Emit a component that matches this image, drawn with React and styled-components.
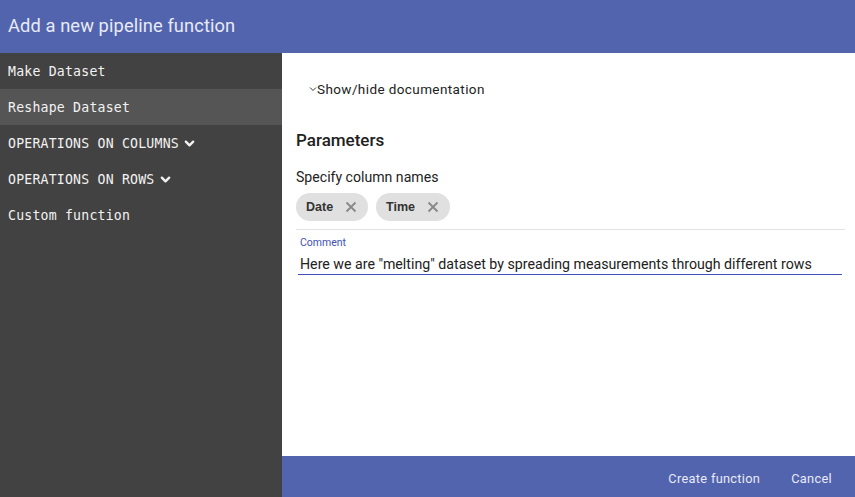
import React from 'react';
import styled, { createGlobalStyle } from 'styled-components';

const GlobalStyle = createGlobalStyle`
  html, body {
    margin: 0;
    padding: 0;
    background: #ffffff;
  }
  * {
    box-sizing: border-box;
  }
`;

const Page = styled.div`
  width: 855px;
  height: 497px;
  display: flex;
  flex-direction: column;
  font-family: Roboto, 'Liberation Sans', sans-serif;
  overflow: hidden;
`;

const TitleBar = styled.header`
  height: 53px;
  flex-shrink: 0;
  background: #5264ae;
  color: #e8eaf6;
  display: flex;
  align-items: center;
  padding: 0 8px 2px;
  font-size: 18.3px;
  letter-spacing: 0.1px;
`;

const Body = styled.div`
  flex: 1;
  display: flex;
  min-height: 0;
`;

const Sidebar = styled.nav`
  width: 282px;
  flex-shrink: 0;
  background: #424242;
  display: flex;
  flex-direction: column;
`;

const NavItem = styled.div`
  height: 36px;
  display: flex;
  align-items: center;
  gap: 5px;
  padding: 0 8px;
  background: ${p => (p.$active ? '#555555' : 'transparent')};
  color: #f2f2f2;
  font-family: 'DejaVu Sans Mono', 'Liberation Mono', monospace;
  font-size: 13.2px;
  letter-spacing: 0.2px;
`;

const Main = styled.main`
  flex: 1;
  display: flex;
  flex-direction: column;
  min-width: 0;
`;

const Content = styled.section`
  flex: 1;
  padding: 26px 10px 0 14px;
  color: #212121;
`;

const DocToggle = styled.div`
  display: flex;
  align-items: center;
  padding-left: 13px;
  height: 20px;
  font-size: 13.5px;
  letter-spacing: 0.4px;
  color: #222;
`;

const SectionTitle = styled.h2`
  margin: 30px 0 0;
  font-size: 17px;
  font-weight: 500;
  color: #212121;
  line-height: 22px;
`;

const FieldLabel = styled.div`
  margin-top: 16px;
  font-size: 14.1px;
  line-height: 20px;
  color: #222;
`;

const ChipRow = styled.div`
  display: flex;
  gap: 8px;
  margin-top: 6px;
  padding-bottom: 8px;
  border-bottom: 1px solid #e4e4e4;
`;

const Chip = styled.div`
  height: 28px;
  display: flex;
  align-items: center;
  gap: 12px;
  padding: 0 11px 0 10px;
  border-radius: 14px;
  background: #e0e0e0;
  color: #333;
  font-family: 'Liberation Sans', Arial, sans-serif;
  font-weight: bold;
  font-size: 12.5px;
`;

const CommentField = styled.div`
  margin: 6px 3px 0 2px;
  border-bottom: 1px solid #3f51b5;
  padding-bottom: 1px;
`;

const CommentLabel = styled.div`
  font-size: 10.5px;
  color: #3f51b5;
  padding-left: 2px;
  line-height: 14px;
`;

const CommentValue = styled.div`
  margin-top: 5px;
  font-size: 14.2px;
  color: #212121;
  padding-left: 2px;
  line-height: 18px;
  white-space: nowrap;
`;

const Footer = styled.footer`
  height: 41px;
  flex-shrink: 0;
  background: #5264ae;
  display: flex;
  justify-content: flex-end;
  align-items: center;
  gap: 31px;
  padding: 3px 23px 0 0;
`;

const FooterButton = styled.button`
  background: none;
  border: none;
  padding: 0;
  color: #e8eaf6;
  font-family: Roboto, 'Liberation Sans', sans-serif;
  font-size: 12.8px;
  letter-spacing: 0.3px;
  cursor: pointer;
`;

const Chevron = () => (
  <svg width="11" height="11" viewBox="0 0 12 12" fill="none">
    <path d="M2 4 L6 8 L10 4" stroke="currentColor" strokeWidth="2.6" strokeLinecap="round" strokeLinejoin="round" />
  </svg>
);

const Close = () => (
  <svg width="12" height="12" viewBox="0 0 12 12">
    <path d="M1.5 1.5 L10.5 10.5 M10.5 1.5 L1.5 10.5" stroke="#888" strokeWidth="1.8" />
  </svg>
);

const navItems = [
  { label: 'Make Dataset' },
  { label: 'Reshape Dataset', active: true },
  { label: 'OPERATIONS ON COLUMNS', group: true },
  { label: 'OPERATIONS ON ROWS', group: true },
  { label: 'Custom function' },
];

export default function App() {
  return (
    <Page>
      <GlobalStyle />
      <TitleBar>Add a new pipeline function</TitleBar>
      <Body>
        <Sidebar>
          {navItems.map(item => (
            <NavItem key={item.label} $active={item.active}>
              {item.label}
              {item.group && <Chevron />}
            </NavItem>
          ))}
        </Sidebar>
        <Main>
          <Content>
            <DocToggle>
              <svg width="8" height="8" viewBox="0 0 8 8" fill="none">
                <path d="M1 2.5 L4 5.5 L7 2.5" stroke="#333" strokeWidth="1" />
              </svg>
              Show/hide documentation
            </DocToggle>
            <SectionTitle>Parameters</SectionTitle>
            <FieldLabel>Specify column names</FieldLabel>
            <ChipRow>
              <Chip>
                Date
                <Close />
              </Chip>
              <Chip>
                Time
                <Close />
              </Chip>
            </ChipRow>
            <CommentField>
              <CommentLabel>Comment</CommentLabel>
              <CommentValue>
                Here we are "melting" dataset by spreading measurements through different rows
              </CommentValue>
            </CommentField>
          </Content>
          <Footer>
            <FooterButton>Create function</FooterButton>
            <FooterButton>Cancel</FooterButton>
          </Footer>
        </Main>
      </Body>
    </Page>
  );
}
